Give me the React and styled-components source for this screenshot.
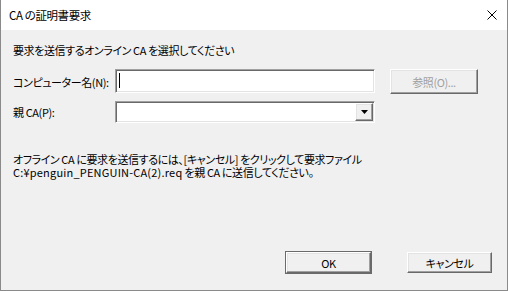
import React from "react";
import styled, { createGlobalStyle } from "styled-components";

const GlobalStyle = createGlobalStyle`
  html, body {
    margin: 0;
    padding: 0;
    background: #ffffff;
  }
  body {
    font-family: "Noto Sans CJK JP", "Noto Sans", sans-serif;
    font-size: 11px;
    letter-spacing: -0.4px;
    font-feature-settings: "palt";
    color: #000;
  }
`;

export default function App() {
  return (
    <>
      <GlobalStyle />
      <Window>
        <TitleBar>
          <Title>CA の証明書要求</Title>
          <CloseButton aria-label="閉じる">
            <svg width="10" height="10" viewBox="0 0 10 10">
              <path d="M0.5 0.5 L9.5 9.5 M9.5 0.5 L0.5 9.5" stroke="#000" strokeWidth="1" fill="none" />
            </svg>
          </CloseButton>
        </TitleBar>
        <Body>
          <Heading>要求を送信するオンライン CA を選択してください</Heading>
          <Form>
            <Label>コンピューター名(N):</Label>
            <TextField>
              <Caret />
            </TextField>
            <PushButton disabled>参照(O)...</PushButton>
            <Label>親 CA(P):</Label>
            <Combo>
              <DropButton>
                <svg width="7" height="4" viewBox="0 0 7 4">
                  <path d="M0 0 H7 L3.5 4 Z" fill="#000" />
                </svg>
              </DropButton>
            </Combo>
          </Form>
          <Note>
            <NoteLine>オフライン CA に要求を送信するには、[キャンセル] をクリックして要求ファイル</NoteLine>
            <NoteLine>
              <Latin>C:¥penguin_PENGUIN-CA(2).req</Latin> を親 CA に送信してください。
            </NoteLine>
          </Note>
          <Footer>
            <DialogButton $default>OK</DialogButton>
            <DialogButton>キャンセル</DialogButton>
          </Footer>
        </Body>
      </Window>
    </>
  );
}

const Window = styled.div`
  width: 508px;
  height: 291px;
  box-sizing: border-box;
  display: flex;
  flex-direction: column;
  border: 1px solid #8a8a8a;
  border-top: none;
  background: #f0f0f0;
`;

const TitleBar = styled.div`
  height: 30px;
  flex: none;
  background: #ffffff;
  display: flex;
  align-items: center;
  justify-content: space-between;
  padding: 0 9px 0 8px;
`;

const Title = styled.span`
  font-size: 11.5px;
  line-height: 1;
  margin-top: 1px;
`;

const CloseButton = styled.div`
  width: 10px;
  height: 10px;
  display: flex;
  margin-right: 1px;
  svg {
    display: block;
  }
`;

const Body = styled.div`
  flex: 1;
  display: flex;
  flex-direction: column;
  padding: 13px 15px 17px 12px;
`;

const Heading = styled.div`
  line-height: 14px;
`;

const Form = styled.div`
  display: grid;
  grid-template-columns: 102px 260px auto;
  grid-template-rows: 25px 22px;
  row-gap: 7px;
  margin-top: 12px;
  align-items: start;
`;

const Label = styled.div`
  align-self: center;
  line-height: 14px;
  white-space: nowrap;
`;

const Sunken = styled.div`
  box-sizing: border-box;
  background: #ffffff;
  border: 1px solid;
  border-color: #a0a0a0 #ffffff #ffffff #a0a0a0;
  box-shadow: inset 1px 1px #696969, inset -1px -1px #e3e3e3;
`;

const TextField = styled(Sunken)`
  height: 24px;
  position: relative;
`;

const Caret = styled.span`
  position: absolute;
  left: 3px;
  top: 3px;
  width: 1px;
  height: 15px;
  background: #000;
`;

const Combo = styled(Sunken)`
  height: 22px;
  display: flex;
  justify-content: flex-end;
  padding: 1px;
`;

const Raised = styled.button`
  box-sizing: border-box;
  font: inherit;
  letter-spacing: inherit;
  font-feature-settings: inherit;
  color: #000;
  background: #f0f0f0;
  border: 1px solid;
  border-color: #ffffff #696969 #696969 #ffffff;
  box-shadow: inset -1px -1px #a0a0a0, inset 1px 1px #e3e3e3;
  padding: 0;
  display: flex;
  align-items: center;
  justify-content: center;
`;

const DropButton = styled(Raised).attrs({ as: "div" })`
  width: 18px;
  height: 100%;
`;

const PushButton = styled(Raised)`
  width: 88px;
  height: 25px;
  margin-left: 15px;
  &:disabled {
    color: #a0a0a0;
  }
`;

const Note = styled.div`
  margin-top: 30px;
`;

const NoteLine = styled.div`
  height: 13px;
  line-height: 13px;
  white-space: nowrap;
`;

const Latin = styled.span`
  letter-spacing: 0.2px;
`;

const Footer = styled.div`
  margin-top: auto;
  display: flex;
  justify-content: flex-end;
  gap: 36px;
`;

const DialogButton = styled(Raised)`
  width: 85px;
  height: 21px;
  outline: ${(p) => (p.$default ? "1px solid #6a6a6a" : "none")};
  outline-offset: 0;
`;
